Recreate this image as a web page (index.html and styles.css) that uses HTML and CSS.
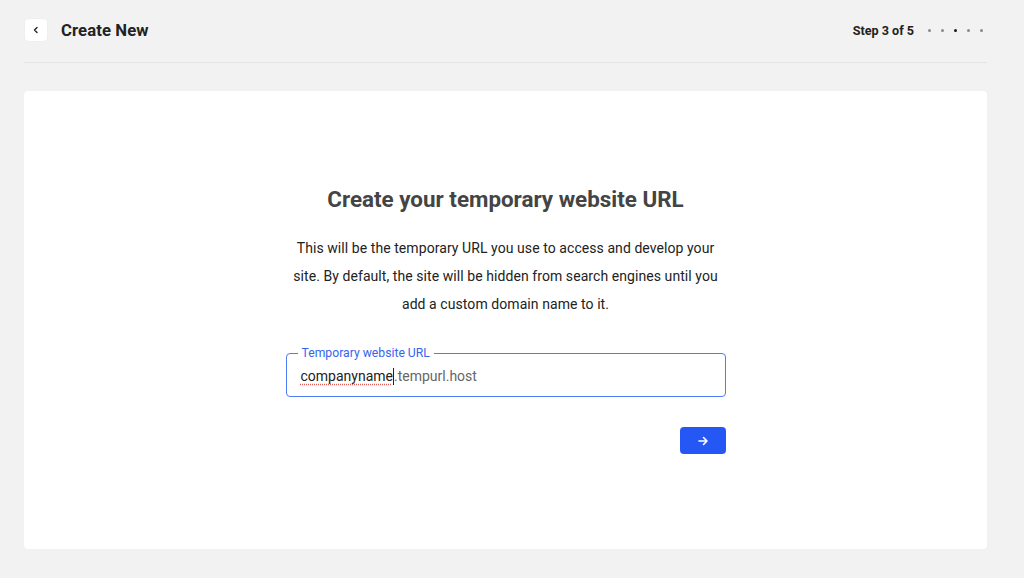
FILE: index.html
```html
<!DOCTYPE html>
<html lang="en">
<head>
<meta charset="utf-8">
<title>Create New</title>
<link rel="stylesheet" href="styles.css">
</head>
<body>
<div class="page">
  <header class="topbar">
    <div class="topbar-left">
      <button class="back-btn" aria-label="Back">
        <svg width="8" height="8" viewBox="0 0 8 8"><path d="M5 1.5 L2.5 4 L5 6.5" fill="none" stroke="#222" stroke-width="1.4" stroke-linecap="round" stroke-linejoin="round"/></svg>
      </button>
      <h1 class="title">Create New</h1>
    </div>
    <div class="steps">
      <span class="steps-label">Step 3 of 5</span>
      <span class="dots">
        <span class="dot"></span>
        <span class="dot"></span>
        <span class="dot active"></span>
        <span class="dot"></span>
        <span class="dot"></span>
      </span>
    </div>
  </header>
  <main class="card">
    <div class="content">
      <h2 class="heading">Create your temporary website URL</h2>
      <p class="lead">This will be the temporary URL you use to access and develop your site. By default, the site will be hidden from search engines until you add a custom domain name to it.</p>
      <div class="field">
        <span class="field-label">Temporary website URL</span>
        <div class="field-value"><span class="typed">companyname</span><span class="caret"></span><span class="suffix">.tempurl.host</span></div>
      </div>
      <div class="actions">
        <button class="next-btn" aria-label="Next">
          <svg width="12" height="12" viewBox="0 0 12 12"><path d="M2 6 H10 M6.5 2.5 L10 6 L6.5 9.5" fill="none" stroke="#fff" stroke-width="1.6" stroke-linecap="round" stroke-linejoin="round"/></svg>
        </button>
      </div>
    </div>
  </main>
</div>
</body>
</html>
```

FILE: styles.css
```css
* { box-sizing: border-box; }
html, body {
  margin: 0;
  padding: 0;
  background: #f2f2f2;
  font-family: Roboto, "Liberation Sans", Arial, sans-serif;
  color: #222;
}
.page {
  margin: 0 37px 0 24px;
}
.topbar {
  height: 63px;
  display: flex;
  align-items: center;
  justify-content: space-between;
  border-bottom: 1px solid #e4e4e4;
  padding: 0 4px 2px 1px;
}
.topbar-left {
  display: flex;
  align-items: center;
  gap: 14px;
}
.back-btn {
  width: 22px;
  height: 22px;
  border: none;
  border-radius: 4px;
  background: #fff;
  display: flex;
  align-items: center;
  justify-content: center;
  padding: 0;
  box-shadow: 0 0 0 0.5px #ececec;
}
.title {
  margin: 0;
  font-size: 16.7px;
  font-weight: 700;
  color: #222;
  letter-spacing: 0.1px;
}
.steps {
  display: flex;
  align-items: center;
  gap: 14px;
}
.steps-label {
  font-size: 12.6px;
  font-weight: 700;
  color: #222;
}
.dots {
  display: flex;
  gap: 10px;
  align-items: center;
}
.dot {
  width: 3px;
  height: 3px;
  border-radius: 50%;
  background: #8a8a8a;
}
.dot.active {
  background: #1a1a1a;
}
.card {
  margin-top: 28px;
  background: #fff;
  border-radius: 4px;
  padding: 94px 0 95px;
  display: flex;
  justify-content: center;
}
.content {
  width: 440px;
  text-align: center;
}
.heading {
  margin: 0;
  font-size: 22.4px;
  line-height: 28px;
  font-weight: 700;
  color: #444;
}
.lead {
  margin: 21px 0 0;
  font-size: 14px;
  line-height: 28px;
  letter-spacing: 0.07px;
  color: #222;
  padding: 0 2px;
}
.field {
  position: relative;
  margin-top: 35px;
  height: 44px;
  border: 1px solid #4d7cf5;
  border-radius: 4px;
  text-align: left;
  display: flex;
  align-items: center;
  padding: 2px 14px 0;
}
.field-label {
  position: absolute;
  top: -8px;
  left: 11px;
  padding: 0 4px;
  background: #fff;
  font-size: 12.2px;
  line-height: 14px;
  color: #3366ee;
}
.field-value {
  font-size: 14px;
  display: flex;
  align-items: center;
}
.typed {
  color: #222;
  text-decoration: underline dotted #e05a5a;
  text-underline-offset: 3px;
}
.caret {
  width: 1px;
  height: 17px;
  background: #222;
}
.suffix {
  color: #666;
}
.actions {
  margin-top: 30px;
  display: flex;
  justify-content: flex-end;
}
.next-btn {
  width: 46px;
  height: 27px;
  border: none;
  border-radius: 4px;
  background: #2557f5;
  display: flex;
  align-items: center;
  justify-content: center;
  padding: 0;
}
```
